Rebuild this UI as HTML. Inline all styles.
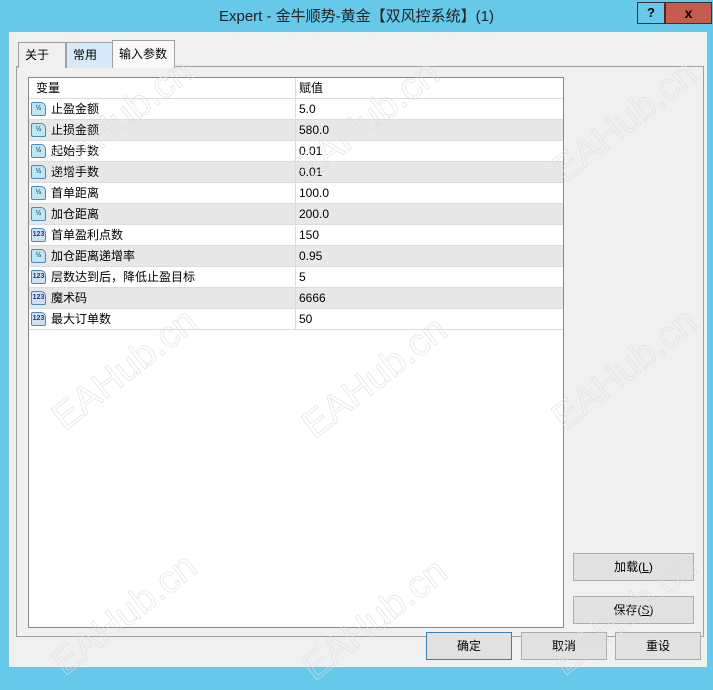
<!DOCTYPE html>
<html><head><meta charset="utf-8"><style>
*{margin:0;padding:0;box-sizing:border-box}
body{width:713px;height:673px;overflow:hidden;background:#66c9ea;font-family:"Liberation Sans","Noto Sans CJK SC",sans-serif;font-size:12px;color:#000;position:relative}
.abs{position:absolute}
.title{left:0;top:0;width:713px;height:32px;text-align:center;font-size:15px;line-height:34px;color:#222}
.client{left:9px;top:32px;width:698px;height:635px;background:#f0f0f0}
.tab{height:26px;border:1px solid #a0a0a0;border-bottom:none;line-height:24px;padding-left:6px;font-size:12px}
.panel{left:16px;top:66px;width:688px;height:571px;border:1px solid #a0a0a0;background:#f0f0f0}
.list{left:28px;top:77px;width:536px;height:551px;border:1px solid #828790;background:#fff}
.row{position:absolute;left:0;width:534px;height:21px;border-bottom:1px solid #dcdcdc;line-height:20px}
.row.g{background:#e8e8e8}
.row .n{position:absolute;left:22px}
.row .v{position:absolute;left:270px}
.row .d{position:absolute;left:266px;top:0;height:21px;border-left:1px solid #dcdcdc}
.ic{position:absolute;left:2px;top:3px;width:15px;height:14px;border:1px solid #4a8ab8;border-radius:2px 5px 2px 2px;font-size:7px;line-height:12px;text-align:center;font-weight:bold}
.f{background:#bfe6f2;color:#1a5e86}
.i{background:#cfe0f2;color:#1a3e86}
.btn{height:28px;border:1px solid #adadad;background:#e1e1e1;text-align:center;line-height:26px;font-size:12px}
.wm{font-size:38px;color:transparent;-webkit-text-stroke:0.6px #dedede;transform:translate(-50%,-50%) rotate(-38deg);white-space:nowrap;font-family:"Liberation Sans",sans-serif}
</style></head><body>
<div class="abs title">Expert - 金牛顺势-黄金【双风控系统】(1)</div>
<div class="abs" style="left:637px;top:2px;width:28px;height:22px;border:1px solid #333;text-align:center;font-weight:bold;font-size:13px;line-height:20px">?</div>
<div class="abs" style="left:665px;top:2px;width:47px;height:22px;border:1px solid #333;background:#c75b50;text-align:center;font-weight:bold;font-size:14px;line-height:20px">x</div>
<div class="abs client"></div>
<div class="abs panel"></div>
<div class="abs tab" style="left:18px;top:42px;width:48px;background:#f0f0f0">关于</div>
<div class="abs tab" style="left:66px;top:42px;width:47px;background:#d8eaf9">常用</div>
<div class="abs tab" style="left:112px;top:40px;width:63px;height:28px;background:#f8f8f8;line-height:26px">输入参数</div>
<div class="abs list">
<div class="row" style="top:0;background:#fff"><span class="n" style="left:7px">变量</span><span class="d"></span><span class="v">赋值</span></div>
<div class="row" style="top:21px"><span class="ic f">½</span><span class="n">止盈金额</span><span class="d"></span><span class="v">5.0</span></div>
<div class="row g" style="top:42px"><span class="ic f">½</span><span class="n">止损金额</span><span class="d"></span><span class="v">580.0</span></div>
<div class="row" style="top:63px"><span class="ic f">½</span><span class="n">起始手数</span><span class="d"></span><span class="v">0.01</span></div>
<div class="row g" style="top:84px"><span class="ic f">½</span><span class="n">递增手数</span><span class="d"></span><span class="v">0.01</span></div>
<div class="row" style="top:105px"><span class="ic f">½</span><span class="n">首单距离</span><span class="d"></span><span class="v">100.0</span></div>
<div class="row g" style="top:126px"><span class="ic f">½</span><span class="n">加仓距离</span><span class="d"></span><span class="v">200.0</span></div>
<div class="row" style="top:147px"><span class="ic i">123</span><span class="n">首单盈利点数</span><span class="d"></span><span class="v">150</span></div>
<div class="row g" style="top:168px"><span class="ic f">½</span><span class="n">加仓距离递增率</span><span class="d"></span><span class="v">0.95</span></div>
<div class="row" style="top:189px"><span class="ic i">123</span><span class="n">层数达到后，降低止盈目标</span><span class="d"></span><span class="v">5</span></div>
<div class="row g" style="top:210px"><span class="ic i">123</span><span class="n">魔术码</span><span class="d"></span><span class="v">6666</span></div>
<div class="row" style="top:231px"><span class="ic i">123</span><span class="n">最大订单数</span><span class="d"></span><span class="v">50</span></div>
</div>
<div class="abs btn" style="left:573px;top:553px;width:121px">加载(<u>L</u>)</div>
<div class="abs btn" style="left:573px;top:596px;width:121px">保存(<u>S</u>)</div>
<div class="abs btn" style="left:426px;top:632px;width:86px;border-color:#3c7fb1">确定</div>
<div class="abs btn" style="left:521px;top:632px;width:86px">取消</div>
<div class="abs btn" style="left:615px;top:632px;width:86px">重设</div>
<div class="abs wm" style="left:120px;top:120px">EAHub.cn</div>
<div class="abs wm" style="left:367px;top:122px">EAHub.cn</div>
<div class="abs wm" style="left:625px;top:122px">EAHub.cn</div>
<div class="abs wm" style="left:125px;top:370px">EAHub.cn</div>
<div class="abs wm" style="left:375px;top:378px">EAHub.cn</div>
<div class="abs wm" style="left:625px;top:370px">EAHub.cn</div>
<div class="abs wm" style="left:125px;top:615px">EAHub.cn</div>
<div class="abs wm" style="left:375px;top:620px">EAHub.cn</div>
<div class="abs wm" style="left:625px;top:615px">EAHub.cn</div>
</body></html>
